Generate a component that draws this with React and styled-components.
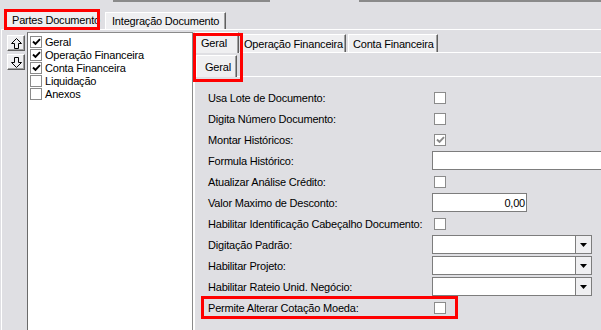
import React from 'react';
import styled, { createGlobalStyle, css } from 'styled-components';

const GlobalStyle = createGlobalStyle`
  html, body { margin: 0; padding: 0; background: #dfdfe3; overflow: hidden; }
  body { font-family: "Liberation Sans", Arial, sans-serif; font-size: 11px; letter-spacing: -0.2px; color: #000; }
  #root { width: 601px; height: 330px; overflow: hidden; }
`;

const Screen = styled.div`
  width: 601px;
  height: 330px;
  display: flex;
  flex-direction: column;
  overflow: hidden;
  background: #dfdfe3;
`;

const TopStrip = styled.div`
  height: 9px;
  display: flex;
  flex-shrink: 0;
`;

const EdgeLine = styled.div`
  height: 2px;
  background: #8a8a8a;
  margin-left: ${(p) => p.$left}px;
  width: ${(p) => p.$w}px;
  flex-shrink: 0;
`;

const TabStrip = styled.div`
  display: flex;
  align-items: flex-end;
  height: ${(p) => p.$h}px;
  padding-left: ${(p) => p.$pad}px;
  margin-top: ${(p) => p.$mt || 0}px;
  position: relative;
  z-index: 1;
  flex-shrink: 0;
`;

const Tab = styled.div`
  box-sizing: border-box;
  display: flex;
  align-items: center;
  white-space: nowrap;
  background: #efeff1;
  border-top: 1px solid #fff;
  border-left: 1px solid #fff;
  border-right: 1px solid #5f5f5f;
  box-shadow: inset -1px 0 #a0a0a0;
  width: ${(p) => p.$w}px;
  height: ${(p) => p.$h}px;
  padding-left: ${(p) => p.$pl}px;
  margin-left: ${(p) => p.$ml || 0}px;
  ${(p) =>
    p.$active &&
    css`
      margin-bottom: -1px;
      position: relative;
      z-index: 2;
    `}
  ${(p) =>
    p.$flag &&
    css`
      outline: 3px solid #ff0000;
      outline-offset: -3px;
    `}
`;

const OuterPanel = styled.div`
  flex: 1;
  display: flex;
  margin-left: 1px;
  border-top: 1px solid #fff;
  border-left: 1px solid #fff;
  min-height: 0;
`;

const Gutter = styled.div`
  width: 25px;
  flex-shrink: 0;
  display: flex;
  flex-direction: column;
  gap: 3px;
  padding-top: 5px;
  padding-left: 5px;
  box-sizing: border-box;
`;

const ArrowButton = styled.div`
  box-sizing: border-box;
  width: 18px;
  height: 16px;
  display: flex;
  align-items: center;
  justify-content: center;
  background: #efeff1;
  border-top: 1px solid #fff;
  border-left: 1px solid #fff;
  border-right: 1px solid #5f5f5f;
  border-bottom: 1px solid #5f5f5f;
  box-shadow: inset -1px -1px #a0a0a0;
`;

const ListBox = styled.div`
  box-sizing: border-box;
  width: 166px;
  flex-shrink: 0;
  margin-top: 2px;
  background: #fff;
  border: 1px solid #8a8a8a;
  border-left-color: #6a6a6a;
  border-bottom: none;
  padding: 2px 0 0 2px;
`;

const ListItem = styled.div`
  height: 13px;
  display: flex;
  align-items: center;
  gap: 3px;
  white-space: nowrap;
`;

const Check = styled.div`
  box-sizing: border-box;
  width: ${(p) => p.$size}px;
  height: ${(p) => p.$size}px;
  border: 1px solid #8b8b8b;
  background: #fff;
  flex-shrink: 0;
  display: flex;
  align-items: center;
  justify-content: center;
  margin-left: ${(p) => p.$ml || 0}px;
`;

const InnerTabs = styled.div`
  flex: 1;
  display: flex;
  flex-direction: column;
  position: relative;
  min-width: 0;
`;

const Highlight = styled.div`
  position: absolute;
  left: ${(p) => p.$x}px;
  top: ${(p) => p.$y}px;
  width: ${(p) => p.$w}px;
  height: ${(p) => p.$h}px;
  box-sizing: border-box;
  border: 3px solid #ff0000;
  pointer-events: none;
  z-index: 5;
`;

const InnerPanel = styled.div`
  flex: 1;
  display: flex;
  flex-direction: column;
  border-top: 1px solid #fff;
  border-left: 1px solid #fff;
`;

const SubPanel = styled.div`
  flex: 1;
  border-top: 1px solid #fff;
  border-left: 1px solid #fff;
  padding: 10px 0 0 7px;
`;

const Row = styled.div`
  box-sizing: border-box;
  height: 21px;
  display: flex;
  align-items: center;
  padding-left: 6px;
  white-space: nowrap;
  ${(p) =>
    p.$flag &&
    css`
      width: 255px;
      outline: 3px solid #ff0000;
      outline-offset: -2px;
    `}
`;

const Label = styled.div`
  width: 224px;
  flex-shrink: 0;
`;

const TextBox = styled.div`
  box-sizing: border-box;
  width: ${(p) => p.$w}px;
  height: 19px;
  flex-shrink: 0;
  background: #fff;
  border: 1px solid #7d7d7d;
  display: flex;
  align-items: center;
  justify-content: flex-end;
  padding-right: 1px;
`;

const Combo = styled.div`
  box-sizing: border-box;
  width: 160px;
  height: 19px;
  flex-shrink: 0;
  background: #fff;
  border: 1px solid #7d7d7d;
  display: flex;
  justify-content: flex-end;
`;

const DropButton = styled.div`
  width: 15px;
  background: #efeff1;
  border-left: 1px solid #7d7d7d;
  display: flex;
  align-items: center;
  justify-content: center;
`;

const Tick = ({ color = '#000' }) => (
  <svg width="9" height="8" viewBox="0 0 9 8">
    <path d="M1 3.5 L3.5 6 L8 1.2" fill="none" stroke={color} strokeWidth="1.9" />
  </svg>
);

const Arrow = ({ down }) => (
  <svg width="11" height="11" viewBox="0 0 11 11" style={down ? { transform: 'scaleY(-1)' } : undefined}>
    <path d="M5.5 0.5 L10.5 5.5 L7.5 5.5 L7.5 10.5 L3.5 10.5 L3.5 5.5 L0.5 5.5 Z" fill="none" stroke="#000" strokeWidth="1" />
  </svg>
);

const Triangle = () => (
  <svg width="7" height="4" viewBox="0 0 7 4">
    <path d="M0 0 H7 L3.5 4 Z" fill="#000" />
  </svg>
);

const listItems = [
  { label: 'Geral', checked: true },
  { label: 'Operação Financeira', checked: true },
  { label: 'Conta Financeira', checked: true },
  { label: 'Liquidação', checked: false },
  { label: 'Anexos', checked: false },
];

const fields = [
  { label: 'Usa Lote de Documento:', kind: 'check' },
  { label: 'Digita Número Documento:', kind: 'check' },
  { label: 'Montar Históricos:', kind: 'checked' },
  { label: 'Formula Histórico:', kind: 'text', w: 200 },
  { label: 'Atualizar Análise Crédito:', kind: 'check' },
  { label: 'Valor Maximo de Desconto:', kind: 'text', w: 95, value: '0,00' },
  { label: 'Habilitar Identificação Cabeçalho Documento:', kind: 'check' },
  { label: 'Digitação Padrão:', kind: 'combo' },
  { label: 'Habilitar Projeto:', kind: 'combo' },
  { label: 'Habilitar Rateio Unid. Negócio:', kind: 'combo' },
  { label: 'Permite Alterar Cotação Moeda:', kind: 'check', flag: true },
];

function Control({ f }) {
  if (f.kind === 'check') return <Check $size={12} $ml={2} />;
  if (f.kind === 'checked')
    return (
      <Check $size={12} $ml={2}>
        <Tick color="#8a8a8a" />
      </Check>
    );
  if (f.kind === 'text') return <TextBox $w={f.w}>{f.value}</TextBox>;
  return (
    <Combo>
      <DropButton>
        <Triangle />
      </DropButton>
    </Combo>
  );
}

export default function App() {
  return (
    <Screen>
      <GlobalStyle />
      <TopStrip>
        <EdgeLine $left={113} $w={157} />
        <EdgeLine $left={89} $w={242} />
      </TopStrip>
      <TabStrip $h={20} $pad={4}>
        <Tab $active $flag $w={96} $h={21} $pl={7}>Partes Documento</Tab>
        <Tab $w={121} $h={17} $pl={6} $ml={5}>Integração Documento</Tab>
      </TabStrip>
      <OuterPanel>
        <Gutter>
          <ArrowButton><Arrow /></ArrowButton>
          <ArrowButton><Arrow down /></ArrowButton>
        </Gutter>
        <ListBox>
          {listItems.map((it) => (
            <ListItem key={it.label}>
              <Check $size={12}>{it.checked && <Tick />}</Check>
              {it.label}
            </ListItem>
          ))}
        </ListBox>
        <InnerTabs>
          <Highlight $x={0} $y={3} $w={50} $h={49} />
          <TabStrip $h={20} $pad={2} $mt={2}>
            <Tab $active $w={44} $h={21} $pl={5}>Geral</Tab>
            <Tab $w={106} $h={18} $pl={3} $ml={1}>Operação Financeira</Tab>
            <Tab $w={90} $h={18} $pl={4} $ml={2}>Conta Financeira</Tab>
          </TabStrip>
          <InnerPanel>
            <TabStrip $h={23} $pad={2}>
              <Tab $active $w={41} $h={22} $pl={8}>Geral</Tab>
            </TabStrip>
            <SubPanel>
              {fields.map((f) => (
                <Row key={f.label} $flag={f.flag}>
                  <Label>{f.label}</Label>
                  <Control f={f} />
                </Row>
              ))}
            </SubPanel>
          </InnerPanel>
        </InnerTabs>
      </OuterPanel>
    </Screen>
  );
}
